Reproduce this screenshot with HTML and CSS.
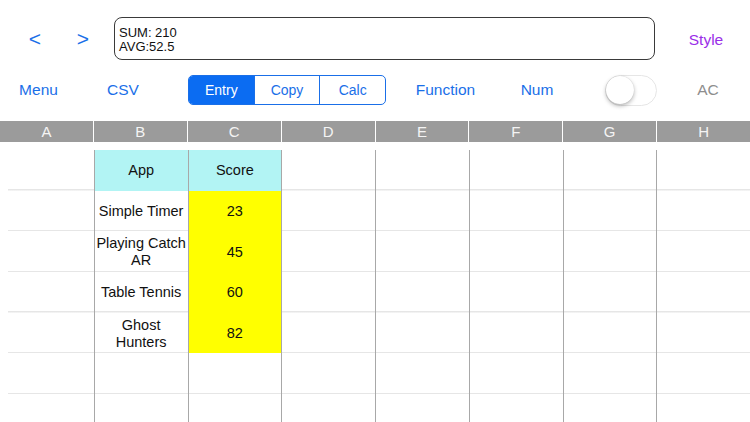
FILE: index.html
```html
<!DOCTYPE html>
<html>
<head>
<meta charset="utf-8">
<link rel="stylesheet" href="styles.css">
</head>
<body>
<div class="app">
  <div class="bar1">
    <span class="nav">&lt;</span>
    <span class="nav">&gt;</span>
    <div class="display">
      <div>SUM: 210</div>
      <div>AVG:52.5</div>
    </div>
    <span class="style-btn">Style</span>
  </div>
  <div class="bar2">
    <span class="btn w-menu">Menu</span>
    <span class="btn w-csv">CSV</span>
    <div class="seg">
      <span class="seg-item active">Entry</span>
      <span class="seg-item">Copy</span>
      <span class="seg-item">Calc</span>
    </div>
    <span class="btn w-func">Function</span>
    <span class="btn w-num">Num</span>
    <div class="toggle"><div class="knob"></div></div>
    <span class="btn ac">AC</span>
  </div>
  <div class="colhead">
    <div>A</div><div>B</div><div>C</div><div>D</div><div>E</div><div>F</div><div>G</div><div>H</div>
  </div>
  <div class="sheet">
    <div class="row">
      <div class="cell"></div><div class="cell cyan">App</div><div class="cell cyan">Score</div><div class="cell"></div><div class="cell"></div><div class="cell"></div><div class="cell"></div><div class="cell"></div>
    </div>
    <div class="row">
      <div class="cell"></div><div class="cell">Simple Timer</div><div class="cell yellow">23</div><div class="cell"></div><div class="cell"></div><div class="cell"></div><div class="cell"></div><div class="cell"></div>
    </div>
    <div class="row">
      <div class="cell"></div><div class="cell">Playing Catch AR</div><div class="cell yellow">45</div><div class="cell"></div><div class="cell"></div><div class="cell"></div><div class="cell"></div><div class="cell"></div>
    </div>
    <div class="row">
      <div class="cell"></div><div class="cell">Table Tennis</div><div class="cell yellow">60</div><div class="cell"></div><div class="cell"></div><div class="cell"></div><div class="cell"></div><div class="cell"></div>
    </div>
    <div class="row">
      <div class="cell"></div><div class="cell">Ghost Hunters</div><div class="cell yellow">82</div><div class="cell"></div><div class="cell"></div><div class="cell"></div><div class="cell"></div><div class="cell"></div>
    </div>
    <div class="row">
      <div class="cell"></div><div class="cell"></div><div class="cell"></div><div class="cell"></div><div class="cell"></div><div class="cell"></div><div class="cell"></div><div class="cell"></div>
    </div>
    <div class="row">
      <div class="cell"></div><div class="cell"></div><div class="cell"></div><div class="cell"></div><div class="cell"></div><div class="cell"></div><div class="cell"></div><div class="cell"></div>
    </div>
  </div>
</div>
</body>
</html>
```
FILE: styles.css
```css
html, body {
  margin: 0;
  padding: 0;
  background: #ffffff;
  overflow: hidden;
}
body {
  font-family: "Liberation Sans", Arial, sans-serif;
  color: #111;
}
.app {
  width: 750px;
  height: 422px;
  overflow: hidden;
}
.bar1 {
  display: flex;
  align-items: center;
  height: 64px;
  padding: 17px 0 4px 22px;
  box-sizing: border-box;
}
.nav {
  width: 26px;
  text-align: center;
  color: #1a6fe8;
  font-size: 21px;
  line-height: 24px;
}
.nav + .nav {
  margin-left: 22px;
}
.display {
  margin-left: 18px;
  width: 541px;
  height: 43px;
  box-sizing: border-box;
  border: 1.3px solid #3a3a3a;
  border-radius: 8px;
  padding: 8px 0 0 4px;
  font-size: 13px;
  line-height: 14px;
  color: #111;
}
.style-btn {
  flex: 1;
  text-align: center;
  padding-left: 7px;
  padding-top: 3px;
  color: #9a2ee8;
  font-size: 15.5px;
}
.bar2 {
  display: flex;
  align-items: center;
  height: 52px;
}
.btn {
  text-align: center;
  color: #1a6fe8;
  font-size: 15.5px;
}
.w-menu { width: 77px; }
.w-csv { width: 92px; }
.w-func { width: 119px; }
.w-num { width: 64px; }
.ac {
  margin-left: 23px;
  width: 56px;
  color: #8e8e8e;
}
.seg {
  margin-left: 19px;
  display: flex;
  width: 198px;
  height: 30px;
  box-sizing: border-box;
  border: 1px solid #1a6fe8;
  border-radius: 5px;
  overflow: hidden;
}
.seg-item {
  flex: 1;
  display: flex;
  align-items: center;
  justify-content: center;
  font-size: 14px;
  color: #1a6fe8;
}
.seg-item + .seg-item {
  border-left: 1px solid #1a6fe8;
}
.seg-item.active {
  background: #0b6cf2;
  color: #ffffff;
}
.toggle {
  margin-left: 36px;
  width: 52px;
  height: 31px;
  box-sizing: border-box;
  border: 1.5px solid #e6e6e6;
  border-radius: 16px;
  background: #fff;
  position: relative;
}
.knob {
  position: absolute;
  left: 0;
  top: 0;
  width: 28px;
  height: 28px;
  border-radius: 50%;
  background: #fff;
  box-shadow: 0 2px 4px rgba(0,0,0,0.28), 0 0 1px rgba(0,0,0,0.2);
}
.colhead {
  margin-top: 5px;
  display: flex;
  height: 21px;
  background: #9b9b9b;
}
.colhead div {
  flex: 1;
  text-align: center;
  color: #f4f4f4;
  font-size: 15px;
  line-height: 21px;
}
.colhead div + div {
  border-left: 1.5px solid #ffffff;
}
.sheet {
  margin-top: 8px;
}
.row {
  display: grid;
  grid-template-columns: repeat(8, 1fr);
  height: 40.7px;
  background: linear-gradient(#e6e6e6, #e6e6e6) 8px 100% / calc(100% - 8px) 1.5px no-repeat;
}
.cell {
  display: flex;
  align-items: center;
  justify-content: center;
  text-align: center;
  font-size: 14.5px;
  line-height: 17px;
  color: #111;
  padding-top: 1px;
}
.cell + .cell {
  border-left: 1.5px solid #a8a8a8;
}
.cyan {
  background: #b2f4f4;
}
.yellow {
  background: #ffff00;
}
```
